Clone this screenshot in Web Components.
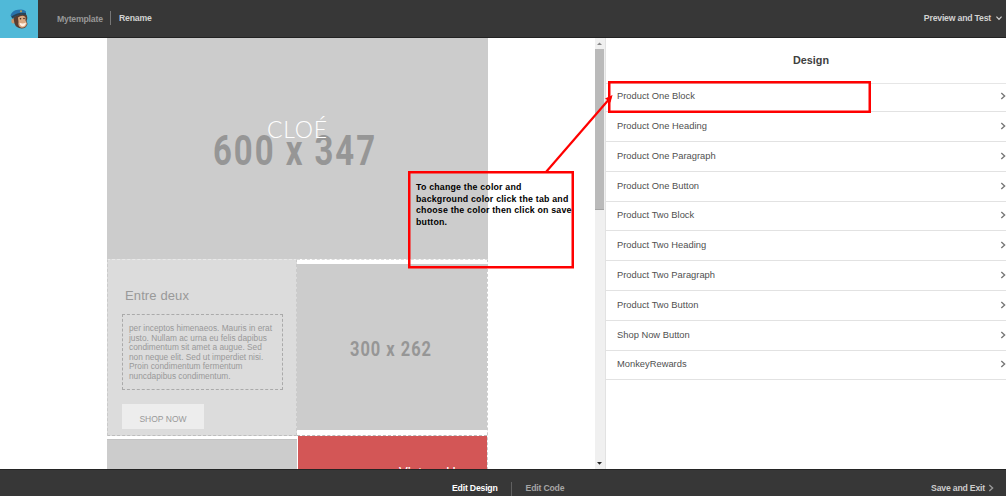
<!DOCTYPE html>
<html lang="en">
<head>
<meta charset="utf-8">
<title>Template editor</title>
<style>
html,body{margin:0;height:100%;overflow:hidden;background:#fff}
body{font-family:"Liberation Sans",Arial,sans-serif}
</style>
</head>
<body>
<editor-app></editor-app>
<script>
const define = (name, html, setup) => customElements.define(name, class extends HTMLElement {
  constructor() {
    super();
    this.attachShadow({ mode: 'open' }).innerHTML = html;
  }
  connectedCallback() { if (setup) setup(this, this.shadowRoot); }
});

define('brand-mark', `
<style>:host{display:flex;width:38px;height:38px;background:#50b9d8}svg{display:block}</style>
<svg width="38" height="38" viewBox="0 0 38 38">
  <ellipse cx="13.2" cy="21" rx="1.9" ry="2.5" fill="#c9976c"/>
  <path d="M13 15.5L25.5 13.5Q28.500 17 26.500 21L27.500 24Q26 28.500 21.500 28.500Q16 28 14.500 23.500Z" fill="#5a3d30"/>
  <path d="M18 17.500Q22 14.500 25.500 17L25.500 20.500L27 23.500Q26 27.800 21.500 27.800Q17.500 26.500 18.500 22Z" fill="#d9a982"/>
  <path d="M19.500 22.800Q23 24.500 26 22.500Q25.500 26.500 22 26.500Q19.500 25.500 19.500 22.800Z" fill="#fff3e6"/>
  <circle cx="20.500" cy="18.800" r=".8" fill="#3b2924"/><circle cx="24" cy="18.500" r=".8" fill="#3b2924"/>
  <path d="M10.500 15.500Q12 10.500 18 9.800Q23.500 8.500 26 11.500L26 15Q19 13.200 12.300 18.500Z" fill="#2873ad"/>
  <path d="M11.300 16.500Q18 11.500 26 13L26 15.300Q18 13.500 12.500 18.600Z" fill="#294457"/>
  <circle cx="21" cy="11.300" r="1.100" fill="#b99b56"/>
</svg>`);

define('chevron-icon', `
<style>:host{display:block;line-height:0}:host([down]) svg{transform:rotate(90deg)}</style>
<svg width="8" height="8" viewBox="0 0 8 8"><path d="M2.300 1L5.600 4L2.300 7" fill="none" stroke="currentColor" stroke-width="1.400"/></svg>`);

define('top-bar', `
<style>
:host{display:flex;align-items:flex-start;height:38px;box-sizing:border-box;background:linear-gradient(#373737 0 37px,#222 37px);font-size:8.700px;letter-spacing:-.2px;line-height:12px;font-weight:bold;color:#d2d2d2}
.name{margin:13px 0 0 19px;color:#989898;width:46px;white-space:nowrap}
.sep{width:1px;height:14px;background:#777;margin:11px 8px 0 7px}
.ren{margin-top:12px}
.prev{margin:12px 0 0 auto;white-space:nowrap}
chevron-icon{margin:14px 3px 0 4px}
chevron-icon{transform:scale(.85)}
</style>
<brand-mark></brand-mark><span class="name">Mytemplate</span><i class="sep"></i><span class="ren">Rename</span>
<span class="prev">Preview and Test</span><chevron-icon down></chevron-icon>`);

define('placeholder-image', `
<style>:host{display:block;background:#ccc;overflow:hidden}svg{display:block;width:100%;height:100%}
text{font-family:Roboto,sans-serif;font-weight:bold;fill:#969696;letter-spacing:.06em}</style>
<svg><text lengthAdjust="spacingAndGlyphs"></text></svg>`, (host, root) => {
  const t = root.querySelector('text');
  t.textContent = host.getAttribute('label');
  t.setAttribute('x', host.getAttribute('x'));
  t.setAttribute('y', host.getAttribute('y'));
  t.setAttribute('textLength', host.getAttribute('span'));
  t.style.fontSize = host.getAttribute('size') + 'px';
});

define('article-block', `
<style>
:host{display:block;box-sizing:border-box;height:177px;background:#dcdcdc;border:1px dashed #cacaca;border-top-color:#e9e9e9;border-bottom-color:#bdbdbd;padding:28px 0 0 14px;color:#999}
h2{margin:0 0 0 3px;font-size:13px;line-height:16px;font-weight:normal;letter-spacing:.12px}
.copy{box-sizing:border-box;width:161px;height:76px;margin-top:10px;border:1px dashed #aaa;padding:9px 0 0 6px;font-size:8.300px;line-height:9.500px;white-space:nowrap}
.btn{width:82px;height:25px;margin-top:14px;background:#ededed;text-align:center;font-size:8.500px;line-height:30px}
</style>
<h2>Entre deux</h2>
<div class="copy">per inceptos himenaeos. Mauris in erat<br>justo. Nullam ac urna eu felis dapibus<br>condimentum sit amet a augue. Sed<br>non neque elit. Sed ut imperdiet nisi.<br>Proin condimentum fermentum<br>nuncdapibus condimentum.</div>
<div class="btn">SHOP NOW</div>`);

define('email-canvas', `
<style>
:host{display:block;width:381px;height:431px;margin-left:107px;overflow:hidden;background:#fff}
.hero{height:221px;position:relative}
.hero placeholder-image{height:221px}
.logo{position:absolute;left:160px;top:77px;font:300 23px/28px Lato,sans-serif;color:#fff;letter-spacing:.8px}
.cols{display:grid;grid-template-columns:190px 191px;height:210px}
.right{border-right:1px dashed #ccc;border-top:1px dashed #ddd}
.right placeholder-image{height:166px;margin-top:4px}
.gap{height:5px;border-bottom:1px dashed #bbb}
.red{height:33px;margin-left:1px;background:#d35656;color:#fff;font:13px/18px Lato,sans-serif;overflow:hidden}
.red span{display:block;margin:27px 0 0 101px;white-space:nowrap}
.next{height:30px;margin-top:3px;background:#ccc;border-top:1px solid #c3c3c3}
</style>
<div class="hero"><placeholder-image label="600 x 347" x="106" y="127" span="164" size="42"></placeholder-image><span class="logo">CLOÉ</span></div>
<div class="cols">
  <div><article-block></article-block><div class="next"></div></div>
  <div class="right"><placeholder-image label="300 x 262" x="53" y="92" span="82" size="21"></placeholder-image><div class="gap"></div><div class="red"><span>Vintage H</span></div></div>
</div>`);

define('scroll-rail', `
<style>
:host{display:flex;flex-direction:column;width:10px;background:#f0f0f0;border-right:1px solid #e2e2e2}
svg{display:block}.thumb{height:161px;width:9px;background:#bababa;border-bottom:1px solid #a5a5a5;box-sizing:border-box}
.end{margin-top:auto}
</style>
<svg width="10" height="11"><path d="M2 7L4.500 4.500L7 7Z" fill="#888"/></svg>
<div class="thumb"></div>
<svg class="end" width="10" height="11"><path d="M2 4L4.500 6.700L7 4Z" fill="#222"/></svg>`);

define('style-row', `
<style>
:host{display:flex;align-items:flex-end;box-sizing:border-box;height:29.800px;border-bottom:1px solid #e2e2e2;padding:0 0 9px 11px;font-size:9.350px;line-height:12px;color:#505050}
:host(:first-of-type){height:28.300px}
chevron-icon{margin:0 -1px 2px auto;color:#777}
</style>
<slot></slot><chevron-icon></chevron-icon>`);

define('design-panel', `
<style>
:host{display:block;flex:1;overflow:hidden}
h1{margin:0;height:45px;text-align:center;font-size:10.800px;line-height:45px;color:#404040;border-bottom:1px solid #e6e6e6;text-indent:10px}
</style>
<h1>Design</h1><slot></slot>`);

define('bottom-bar', `
<style>
:host{display:flex;height:27px;box-sizing:border-box;background:#373737;border-top:1px solid #242424;font-size:8.700px;letter-spacing:-.2px;line-height:12px;font-weight:bold;color:#a5a5a5}
span{margin-top:12px;white-space:nowrap}
.on{margin-left:452px;color:#fff}
i{width:1px;height:14px;margin:12px 14px 0 13px;background:#606060}
.save{margin-left:auto;color:#ccc}
chevron-icon{margin:14px 11px 0 2px;color:#999}
</style>
<span class="on">Edit Design</span><i></i><span>Edit Code</span><span class="save">Save and Exit</span><chevron-icon></chevron-icon>`);

define('callout-note', `
<style>
:host{position:absolute;left:0;top:0;width:1006px;height:496px;pointer-events:none}
svg{position:absolute;left:0;top:0}
p{position:absolute;left:416px;top:182px;margin:0;font-size:8.800px;line-height:11.500px;font-weight:bold;color:#000;white-space:nowrap;letter-spacing:.2px}
</style>
<svg width="1006" height="496" fill="none" stroke="#f00">
  <rect x="609.250" y="82.250" width="260.500" height="29.500" stroke-width="2.500"/>
  <rect x="409.250" y="172.250" width="163.500" height="95" stroke-width="2.500"/>
  <path d="M546 172L611 97" stroke-width="2.200"/>
  <path d="M612.500 95L605 98.500L610.500 102.500Z" fill="#f00" stroke="none"/>
</svg>
<p>To change the color and<br>background color click the tab and<br>choose the color then click on save<br>button.</p>`);

define('editor-app', `
<style>
:host{display:flex;flex-direction:column;position:relative;width:1006px;height:496px;overflow:hidden;background:#fff}
main{display:flex;height:431px}
.preview{width:595px}
</style>
<top-bar></top-bar>
<main>
  <div class="preview"><email-canvas></email-canvas></div>
  <scroll-rail></scroll-rail>
  <design-panel>
    <style-row>Product One Block</style-row><style-row>Product One Heading</style-row><style-row>Product One Paragraph</style-row><style-row>Product One Button</style-row><style-row>Product Two Block</style-row><style-row>Product Two Heading</style-row><style-row>Product Two Paragraph</style-row><style-row>Product Two Button</style-row><style-row>Shop Now Button</style-row><style-row>MonkeyRewards</style-row>
  </design-panel>
</main>
<bottom-bar></bottom-bar>
<callout-note></callout-note>`);
</script>
</body>
</html>
